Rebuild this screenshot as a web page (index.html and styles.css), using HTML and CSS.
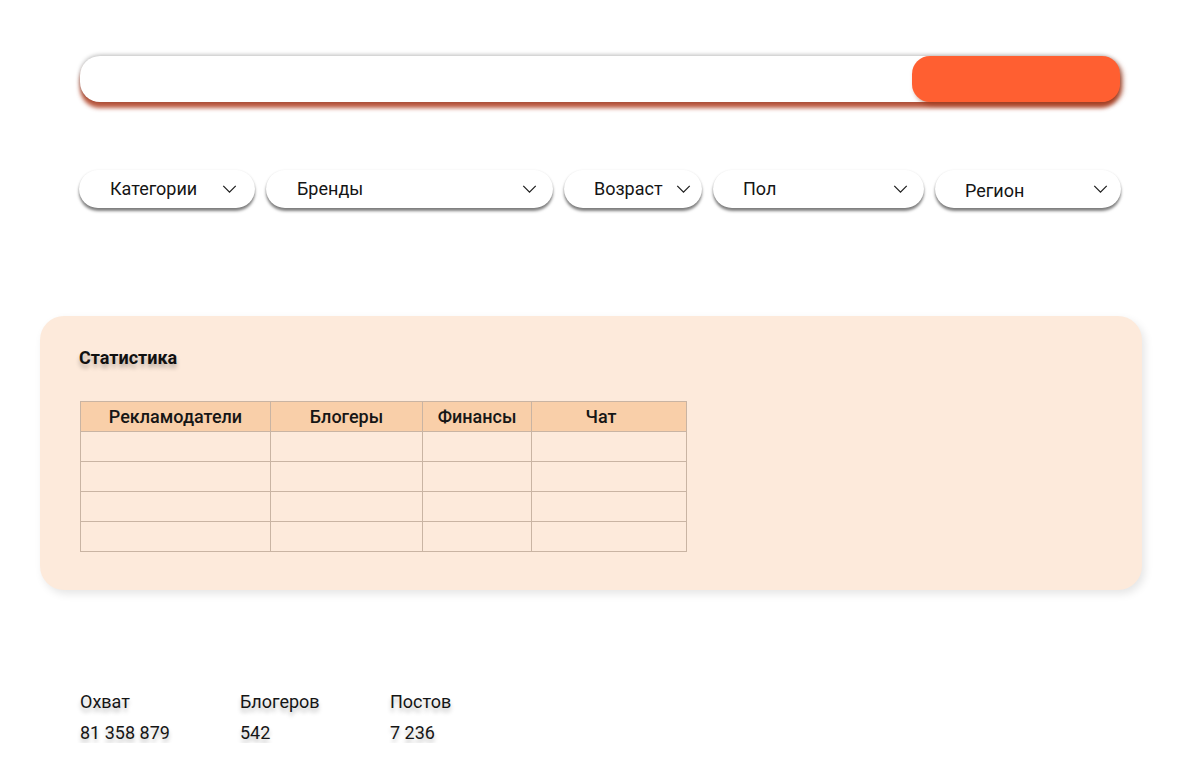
FILE: index.html
```html
<!DOCTYPE html>
<html lang="ru">
<head>
<meta charset="utf-8">
<title>Статистика</title>
<link rel="stylesheet" href="styles.css">
</head>
<body>
<div class="page">
  <div class="search">
    <div class="search-input"></div>
    <div class="search-btn"></div>
  </div>

  <div class="filters">
    <div class="pill pill-cat"><span>Категории</span><svg class="chev" viewBox="0 0 16 9"><path d="M1 1l7 7 7-7"/></svg></div>
    <div class="pill pill-brand"><span>Бренды</span><svg class="chev" viewBox="0 0 16 9"><path d="M1 1l7 7 7-7"/></svg></div>
    <div class="pill pill-age"><span>Возраст</span><svg class="chev" viewBox="0 0 16 9"><path d="M1 1l7 7 7-7"/></svg></div>
    <div class="pill pill-sex"><span>Пол</span><svg class="chev" viewBox="0 0 16 9"><path d="M1 1l7 7 7-7"/></svg></div>
    <div class="pill pill-region"><span>Регион</span><svg class="chev" viewBox="0 0 16 9"><path d="M1 1l7 7 7-7"/></svg></div>
  </div>

  <div class="card">
    <div class="card-title">Статистика</div>
    <table class="stat-table">
      <thead>
        <tr><th class="c1">Рекламодатели</th><th class="c2">Блогеры</th><th class="c3">Финансы</th><th class="c4">Чат</th></tr>
      </thead>
      <tbody>
        <tr><td></td><td></td><td></td><td></td></tr>
        <tr><td></td><td></td><td></td><td></td></tr>
        <tr><td></td><td></td><td></td><td></td></tr>
        <tr><td></td><td></td><td></td><td></td></tr>
      </tbody>
    </table>
  </div>

  <div class="totals">
    <div class="total t1"><div>Охват</div><div>81 358 879</div></div>
    <div class="total t2"><div>Блогеров</div><div>542</div></div>
    <div class="total t3"><div>Постов</div><div>7 236</div></div>
  </div>
</div>
</body>
</html>
```

FILE: styles.css
```css
html, body {
  margin: 0;
  padding: 0;
  background: #ffffff;
}
body {
  font-family: Roboto, "Noto Sans", "Liberation Sans", sans-serif;
  color: #141414;
  font-size: 18px;
}
.page {
  padding-top: 56px;
  width: 1200px;
}

/* search */
.search {
  margin-left: 80px;
  width: 1040px;
  height: 46px;
  display: flex;
  border-radius: 20px;
  background: #fff;
  box-shadow: 0 -1px 4px rgba(0,0,0,0.28), 0 6px 4px rgba(175,60,30,0.85);
}
.search-input {
  flex: 1;
}
.search-btn {
  width: 208px;
  height: 46px;
  border-radius: 18px;
  background: #ff5f31;
  box-shadow: 3px 3px 5px rgba(150,50,20,0.6);
}

/* filters */
.filters {
  margin-top: 68px;
  margin-left: 79px;
  display: flex;
  gap: 11px;
}
.pill {
  height: 38px;
  border-radius: 19px;
  background: #fff;
  box-shadow: 0 0 2px rgba(0,0,0,0.08), 0 3px 3px rgba(0,0,0,0.5);
  display: flex;
  align-items: center;
  justify-content: space-between;
  padding: 0 16px 0 31px;
  box-sizing: border-box;
  font-size: 18px;
  color: #151515;
}
.pill span {
  position: relative;
  top: -1px;
}
.chev {
  width: 15px;
  height: 8px;
  fill: none;
  stroke: #1e1e1e;
  stroke-width: 1.4;
}
.pill-cat { width: 176px; padding-right: 18px; }
.pill-brand { width: 287px; }
.pill-age { width: 138px; padding-left: 30px; padding-right: 11px; }
.pill-sex { width: 211px; padding-left: 30px; }
.pill-region { width: 186px; padding-left: 30px; padding-right: 13px; }
.pill-region span { top: 1px; }

/* card */
.card {
  margin-top: 108px;
  margin-left: 40px;
  width: 1102px;
  height: 274px;
  box-sizing: border-box;
  padding: 31px 0 0 39px;
  background: #fdeadb;
  border-radius: 24px;
  box-shadow: 3px 4px 8px rgba(0,0,0,0.1);
}
.card-title {
  font-weight: 700;
  font-size: 18px;
  line-height: 21px;
  color: #111;
  text-shadow: 0 4px 4px rgba(0,0,0,0.25);
}
.stat-table {
  margin-top: 33px;
  margin-left: 1px;
  border-collapse: collapse;
  table-layout: fixed;
}
.stat-table th,
.stat-table td {
  border: 1px solid #c9b4a3;
  height: 29px;
  padding: 0;
}
.stat-table th {
  background: #f9cfa9;
  font-weight: 500;
  font-size: 18px;
  color: #161616;
  text-align: center;
}
.stat-table td {
  background: #fdeadb;
}
.c1 { width: 189px; }
.c2 { width: 151px; }
.c3 { width: 108px; }
.c4 { width: 154px; }
.stat-table th.c4 { width: 138px; padding-right: 16px; }

/* totals */
.totals {
  margin-top: 101px;
  margin-left: 80px;
  display: flex;
}
.total {
  display: flex;
  flex-direction: column;
  gap: 10px;
  line-height: 21px;
  font-size: 18px;
  color: #151515;
  text-shadow: 0 4px 4px rgba(0,0,0,0.25);
}
.t1 { width: 160px; }
.t2 { width: 150px; }
.t3 { width: 150px; }
```
